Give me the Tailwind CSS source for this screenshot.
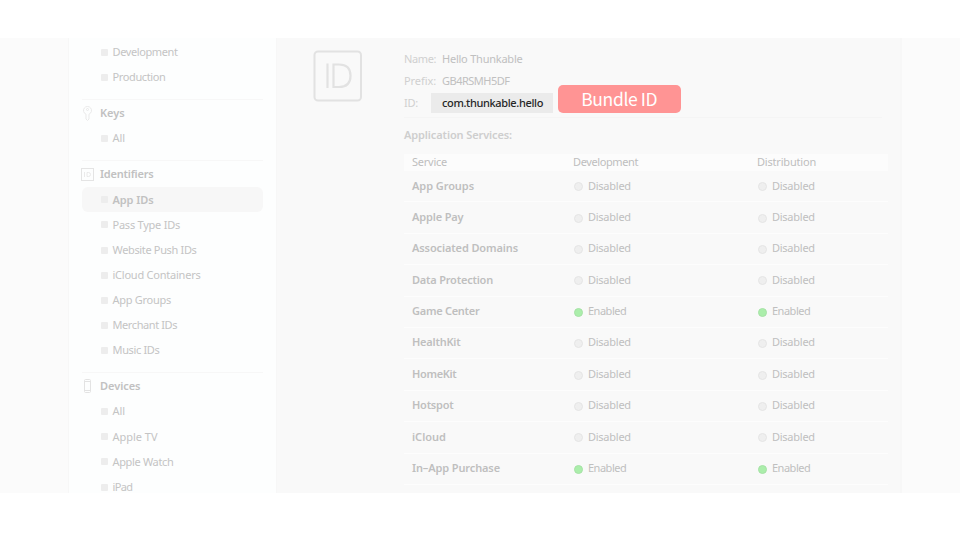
<!DOCTYPE html>
<html lang="en">
<head>
<meta charset="utf-8">
<title>App IDs</title>
<script src="https://cdn.jsdelivr.net/npm/@tailwindcss/browser@4"></script>
</head>
<body class="bg-white w-[960px] h-[540px] overflow-hidden pt-[38px] font-['Noto_Sans','Open_Sans',sans-serif] text-[11px]">
<div class="flex h-[455px] w-full overflow-hidden bg-[#fbfbfb]">
  <nav id="nav" class="ml-[68px] w-[209px] shrink-0 border-x border-[#f7f7f7] bg-[#fdfefe] pt-[1.900px] pl-[13px] pr-[13px] text-[#c4c4c4]"></nav>
  <main class="flex w-[625px] shrink-0 border-r-2 border-[#f7f7f7] bg-[#f9f9f9]">
    <svg class="mt-[12px] ml-[36px] h-[52px] w-[50px] shrink-0" viewBox="0 0 50 52" fill="none" stroke="#e2e2e2">
      <rect x="1.5" y="1.5" width="46.5" height="49" rx="3.5" stroke-width="2"/>
      <path d="M14.500 13.500V38M20.500 14.500H26Q37.500 14.500 37.500 25.700Q37.500 37 26 37H20.500Z" stroke-width="2.2"/>
    </svg>
    <div class="ml-[41px] w-[484px] pt-[10px] text-[#d0d0d0]">
      <div class="flex h-[22px] items-center"><div class="w-[38px]"><span data-w="32">Name:</span></div><span class="text-[#c0c0c0]" data-w="80.500">Hello Thunkable</span></div>
      <div class="flex h-[22px] items-center"><div class="w-[38px]"><span data-w="32">Prefix:</span></div><span class="text-[#c0c0c0]" data-w="67.500">GB4RSMH5DF</span></div>
      <div class="flex h-[22px] items-center"><div class="w-[27px]"><span data-w="14">ID:</span></div><div class="flex h-[20px] w-[122px] items-center bg-[#ebebeb] pl-[11px] text-[#262626]"><span class="font-medium" data-w="101">com.thunkable.hello</span></div>
        <div class="relative top-[-4px] ml-[5px] flex h-[28px] w-[122.500px] shrink-0 items-center justify-center rounded-[5px] bg-[#ff9494] font-['Noto_Sans_CJK_SC',sans-serif] text-[17.500px] text-white"><span data-w="76">Bundle ID</span></div>
      </div>
      <div class="mt-[2.500px] h-px w-[478px] bg-[#f5f5f5]"></div>
      <div class="flex h-[36px] items-center font-semibold text-[#cecece]"><span data-w="108">Application Services:</span></div>
      <div class="flex h-[17.600px] items-center bg-[#fcfcfc] pl-[8px] pb-[1px] text-[#bebebe]">
        <div class="w-[161px]"><span data-w="35">Service</span></div><div class="w-[184px]"><span data-w="65">Development</span></div><div><span data-w="59">Distribution</span></div>
      </div>
      <div id="services" class="text-[#bfbfbf]"></div>
    </div>
  </main>
</div>
<script>
const icons = {
  key: '<svg class="ml-[1px] h-[15px] w-[9px]" viewBox="0 0 9 15" fill="none" stroke="#e9e9e9"><path d="M3 8.200A4 4 0 1 1 6 8.200V13L4.500 14.500L3 13Z"/><circle cx="4.500" cy="3.500" r="1"/></svg>',
  id: '<svg class="-ml-[1px] h-[13px] w-[13px]" viewBox="0 0 13 13" fill="none" stroke="#e4e4e4"><rect x=".5" y=".5" width="12" height="12"/><path d="M3.500 4V9M6 4.500H7.500Q9.500 4.500 9.500 6.500Q9.500 8.500 7.500 8.500H6Z" stroke-width=".8"/></svg>',
  phone: '<svg class="ml-[2px] h-[14px] w-[7px]" viewBox="0 0 7 14" fill="none" stroke="#e3e3e3"><rect x=".5" y=".5" width="6" height="13" rx="1"/><path d="M1 2.500H6M1 11.500H6"/></svg>'
};
const groups = [
  { items: [['Development', 65], ['Production', 53]] },
  { title: ['Keys', 24.500], icon: 'key', items: [['All', 12.500]] },
  { title: ['Identifiers', 53.500], icon: 'id', items: [['App IDs', 41, true], ['Pass Type IDs', 67.500], ['Website Push IDs', 84], ['iCloud Containers', 88], ['App Groups', 58.500], ['Merchant IDs', 64.500], ['Music IDs', 47]] },
  { title: ['Devices', 40.500], icon: 'phone', items: [['All', 12.500], ['Apple TV', 45], ['Apple Watch', 61], ['iPad', 20]] }
];
document.getElementById('nav').innerHTML = groups.map(g =>
  (g.title ? `<div class="mt-[9px] border-t border-[#f7f7f7]"></div><div class="flex h-[26px] items-center font-semibold text-[#c1c1c1]"><div class="w-[18px] shrink-0">${icons[g.icon]}</div><span data-w="${g.title[1]}">${g.title[0]}</span></div>` : '') +
  g.items.map(([t, w, on]) => `<div class="flex h-[25.130px] items-center rounded-[6px] pl-[19px] ${on ? 'bg-[#f7f7f7] font-semibold text-[#c1c1c1]' : ''}"><i class="mr-[4.500px] h-[7px] w-[7px] shrink-0 rounded-[1px] bg-[#ededed]"></i><span data-w="${w}">${t}</span></div>`).join('')
).join('');

const services = [['App Groups', 62], ['Apple Pay', 51.500], ['Associated Domains', 106], ['Data Protection', 81], ['Game Center', 67.500, true], ['HealthKit', 48.500], ['HomeKit', 44.500], ['Hotspot', 41.500], ['iCloud', 34], ['In\u2013App Purchase', 88, true]];
const dot = on => `<i class="relative top-[1px] mr-[4.600px] h-[9px] w-[9px] shrink-0 rounded-full border ${on ? 'border-[#a6e2a6] bg-[#abeeab]' : 'border-[#e5e5e5] bg-[#efefef]'}"></i><span data-w="${on ? 38.500 : 43}">${on ? 'Enabled' : 'Disabled'}</span>`;
document.getElementById('services').innerHTML = services.map(([t, w, on]) =>
  `<div class="flex h-[31.400px] items-center border-b border-[#fdfdfd] pl-[8px] pb-[1px]"><div class="w-[162.300px] font-semibold"><span data-w="${w}">${t}</span></div><div class="flex w-[184px] items-center">${dot(on)}</div><div class="flex items-center">${dot(on)}</div></div>`).join('');

function fit() {
  document.querySelectorAll('[data-w]').forEach(s => {
    s.classList.add('whitespace-nowrap');
    s.style.letterSpacing = '0px';
    s.style.letterSpacing = (s.dataset.w - s.getBoundingClientRect().width) / s.textContent.length + 'px';
  });
}
fit();
new ResizeObserver(fit).observe(document.getElementById('services'));
addEventListener('load', () => { fit(); requestAnimationFrame(fit); setTimeout(fit, 60); });
document.fonts.ready.then(fit);
</script>
</body>
</html>
